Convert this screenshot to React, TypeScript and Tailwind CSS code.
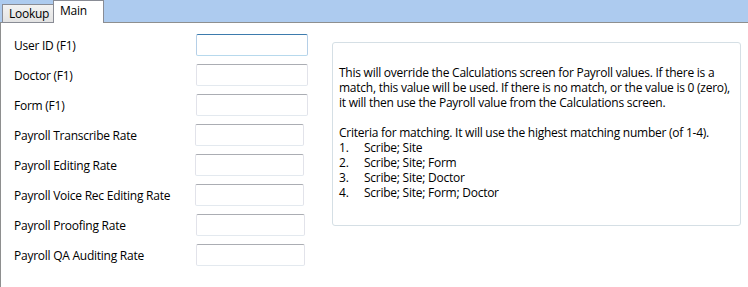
const fields = [
  { label: "User ID (F1)", x: "ml-[195px]", w: "w-[112px]", focused: true },
  { label: "Doctor (F1)", x: "ml-[195px]", w: "w-[112px]" },
  { label: "Form (F1)", x: "ml-[195px]", w: "w-[112px]" },
  { label: "Payroll Transcribe Rate", x: "ml-[194px]", w: "w-[109px]" },
  { label: "Payroll Editing Rate", x: "ml-[194px]", w: "w-[109px]" },
  { label: "Payroll Voice Rec Editing Rate", x: "ml-[194px]", w: "w-[109px]" },
  { label: "Payroll Proofing Rate", x: "ml-[195px]", w: "w-[109px]" },
  { label: "Payroll QA Auditing Rate", x: "ml-[195px]", w: "w-[109px]" },
];

const criteria = [
  "Scribe; Site",
  "Scribe; Site; Form",
  "Scribe; Site; Doctor",
  "Scribe; Site; Form; Doctor",
];

function TextBox({ w, focused }: { w: string; focused?: boolean }) {
  return (
    <input
      type="text"
      className={
        focused
          ? `${w} h-[22px] rounded-[2px] border border-[#b5cfe7] border-t-[#3d7bad] border-b-[#b7d9ed] bg-white outline-none`
          : `${w} h-[22px] rounded-[2px] border border-[#e2e3ea] border-t-[#abadb3] border-b-[#e3e9ef] bg-white outline-none`
      }
    />
  );
}

export default function App() {
  return (
    <div
      className="w-[748px] h-[287px] bg-white text-[12px] tracking-[-0.25px] text-black overflow-hidden"
      style={{ fontFamily: '"Open Sans", "Noto Sans", sans-serif' }}
    >
      {/* tab strip */}
      <div className="relative h-[23px] bg-[#adcbef] border-b border-[#8e8f8f]">
        <div className="absolute left-[2px] top-[4px] w-[52px] h-[19px] border border-[#898c95] bg-gradient-to-b from-[#f2f2f2] to-[#e3e3e3] pl-[6px] leading-[17px]">
          Lookup
        </div>
        <div className="absolute left-[53px] top-0 w-[51px] h-[23px] border border-b-0 border-[#898c95] bg-white pl-[6px] leading-[19px]">
          Main
        </div>
      </div>

      <div className="flex h-[264px]">
        <div className="w-[332px] border-l border-[#8e8f8f] pt-[11px] flex flex-col gap-[8px]">
          {fields.map((f) => (
            <div key={f.label} className="relative flex items-center h-[22px]">
              <span className="absolute left-[13px] top-[3px] whitespace-nowrap">{f.label}</span>
              <div className={f.x}>
                <TextBox w={f.w} focused={f.focused} />
              </div>
            </div>
          ))}
        </div>

        <div className="mt-[19px] w-[409px] h-[184px] rounded-[3px] border border-[#d5dfe5] pl-[6px] pt-[22px] leading-[15px] whitespace-nowrap">
          <p>
            This will override the Calculations screen for Payroll values. If there is a
            <br />
            match, this value will be used. If there is no match, or the value is 0 (zero),
            <br />
            it will then use the Payroll value from the Calculations screen.
          </p>
          <p className="mt-[15px]">
            Criteria for matching. It will use the highest matching number (of 1-4).
          </p>
          {criteria.map((c, i) => (
            <div key={c} className="flex">
              <span className="w-[25px]">{i + 1}.</span>
              <span>{c}</span>
            </div>
          ))}
        </div>
      </div>
    </div>
  );
}
